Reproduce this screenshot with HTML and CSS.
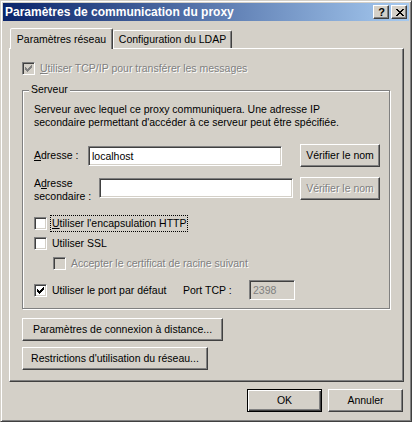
FILE: index.html
```html
<!DOCTYPE html>
<html lang="fr">
<head>
<meta charset="utf-8">
<title>Paramètres de communication du proxy</title>
<link rel="stylesheet" href="styles.css">
</head>
<body>
<div class="window">
  <div class="titlebar">
    <span class="title">Paramètres de communication du proxy</span>
    <div class="caption-btns">
      <span class="cbtn help">?</span>
      <span class="cbtn close">
        <svg width="8" height="7" viewBox="0 0 8 7" shape-rendering="crispEdges"><path fill="#000" d="M0 0h2v1h-2z M6 0h2v1h-2z M1 1h2v1h-2z M5 1h2v1h-2z M2 2h4v1h-4z M3 3h2v1h-2z M2 4h4v1h-4z M1 5h2v1h-2z M5 5h2v1h-2z M0 6h2v1h-2z M6 6h2v1h-2z"/></svg>
      </span>
    </div>
  </div>

  <div class="tabs">
    <div class="tab active">Paramètres réseau</div>
    <div class="tab">Configuration du LDAP</div>
  </div>

  <div class="panel">
    <div class="check-row disabled">
      <span class="cb checked"><svg width="7" height="7" viewBox="0 0 7 7" shape-rendering="crispEdges"><path d="M6 0h1v1h-1z M5 1h2v1h-2z M0 2h1v1h-1z M4 2h3v1h-3z M0 3h2v1h-2z M3 3h3v1h-3z M0 4h5v1h-5z M1 5h3v1h-3z M2 6h1v1h-1z"/></svg></span>
      <span class="lbl"><u>U</u>tiliser TCP/IP pour transférer les messages</span>
    </div>

    <div class="group">
      <span class="group-label">Serveur</span>
      <p class="desc">Serveur avec lequel ce proxy communiquera. Une adresse IP<br>secondaire permettant d'accéder à ce serveur peut être spécifiée.</p>

      <div class="field-row row-main">
        <span class="flabel w-addr"><u>A</u>dresse :</span>
        <div class="edit">localhost</div>
        <span class="btn vbtn">Vérifier le nom</span>
      </div>

      <div class="field-row row-second">
        <span class="flabel w-sec">A<u>d</u>resse<br>secondaire :</span>
        <div class="edit edit-sec"></div>
        <span class="btn vbtn disabled">Vérifier le nom</span>
      </div>

      <div class="check-row opt http">
        <span class="cb"></span>
        <span class="lbl focus"><u>U</u>tiliser l'encapsulation HTTP</span>
      </div>

      <div class="check-row opt ssl">
        <span class="cb"></span>
        <span class="lbl">Utiliser SSL</span>
      </div>

      <div class="check-row opt accept disabled">
        <span class="cb"></span>
        <span class="lbl">Accepter le certificat de racine suivant</span>
      </div>

      <div class="port-row">
        <div class="check-row port-check">
          <span class="cb checked"><svg width="7" height="7" viewBox="0 0 7 7" shape-rendering="crispEdges"><path d="M6 0h1v1h-1z M5 1h2v1h-2z M0 2h1v1h-1z M4 2h3v1h-3z M0 3h2v1h-2z M3 3h3v1h-3z M0 4h5v1h-5z M1 5h3v1h-3z M2 6h1v1h-1z"/></svg></span>
          <span class="lbl">Utiliser le port par défaut</span>
        </div>
        <span class="port-label">Port TCP :</span>
        <div class="edit edit-port disabled">2398</div>
      </div>
    </div>

    <span class="btn wide btn-remote">Paramètres de connexion à distance...</span>
    <span class="btn wide btn-restrict">Restrictions d'utilisation du réseau...</span>
  </div>

  <div class="footer">
    <span class="btn dlg default">OK</span>
    <span class="btn dlg">Annuler</span>
  </div>
</div>
</body>
</html>
```

FILE: styles.css
```css
* {
  box-sizing: border-box;
}

html,
body {
  margin: 0;
  padding: 0;
  background: #d4d0c8;
}

body {
  font-family: "Liberation Sans", Arial, sans-serif;
  font-size: 10.5px;
  line-height: 13px;
  color: #000;
}

u {
  text-decoration: underline;
  text-underline-offset: 1px;
}

.window {
  width: 412px;
  height: 422px;
  background: #d4d0c8;
  border: 1px solid;
  border-color: #d4d0c8 #404040 #404040 #d4d0c8;
  box-shadow: inset 1px 1px #fff, inset -1px -1px #808080;
  padding: 2px;
  display: flex;
  flex-direction: column;
}

/* title bar */
.titlebar {
  height: 18px;
  flex: none;
  background: linear-gradient(to right, #0a246a, #a6caf0);
  display: flex;
  align-items: flex-start;
  padding-left: 2px;
}

.title {
  flex: 1;
  color: #fff;
  font-weight: bold;
  font-size: 12px;
  line-height: 18px;
  white-space: nowrap;
}

.caption-btns {
  display: flex;
  gap: 2px;
  margin: 2px 2px 0 0;
}

.cbtn {
  width: 16px;
  height: 14px;
  background: #d4d0c8;
  border: 1px solid;
  border-color: #fff #404040 #404040 #fff;
  box-shadow: inset -1px -1px #808080;
  display: flex;
  align-items: center;
  justify-content: center;
}

.help {
  font-weight: bold;
  font-size: 11px;
  line-height: 12px;
  padding-left: 1px;
}

.close svg {
  display: block;
  margin-left: 1px;
}

/* tabs */
.tabs {
  display: flex;
  align-items: flex-end;
  height: 20px;
  margin: 7px 0 0 7px;
  flex: none;
}

.tab {
  height: 18px;
  min-width: 0;
  padding: 0;
  border: 1px solid;
  border-bottom: none;
  border-color: #fff #404040 transparent #fff;
  border-radius: 2px 2px 0 0;
  box-shadow: inset -1px 0 #808080;
  line-height: 17px;
  text-align: center;
  white-space: nowrap;
  flex: none;
}

.tab.active {
  position: relative;
  z-index: 1;
  height: 21px;
  width: 103px;
  margin-bottom: -1px;
  background: #d4d0c8;
  line-height: 20px;
}

.tabs .tab:not(.active) {
  width: 119px;
}

/* panel */
.panel {
  width: 395px;
  height: 334px;
  margin-left: 6px;
  flex: none;
  border: 1px solid;
  border-color: #fff #404040 #404040 #fff;
  box-shadow: inset -1px -1px #808080;
  padding: 13px 13px 0 12px;
  display: flex;
  flex-direction: column;
  align-items: flex-start;
}

/* checkboxes */
.check-row {
  display: flex;
  align-items: center;
  gap: 5px;
  height: 13px;
  white-space: nowrap;
}

.cb {
  width: 13px;
  height: 13px;
  flex: none;
  background: #fff;
  border: 1px solid;
  border-color: #808080 #fff #fff #808080;
  box-shadow: inset 1px 1px #404040, inset -1px -1px #d4d0c8;
  padding: 2px;
  display: flex;
}

.cb svg {
  display: block;
  fill: #000;
}

.disabled .cb {
  background: #d4d0c8;
}

.disabled .cb svg {
  fill: #808080;
}

.disabled .lbl,
.btn.disabled {
  color: #808080;
  text-shadow: 1px 1px 0 #fff;
}

/* group box */
.group {
  position: relative;
  width: 368px;
  margin-top: 15px;
  border: 1px solid #808080;
  box-shadow: 1px 1px 0 #fff, inset 1px 1px 0 #fff;
  padding: 12px 9px 8px 11px;
  display: flex;
  flex-direction: column;
  align-items: stretch;
}

.group-label {
  position: absolute;
  top: -8px;
  left: 6px;
  padding: 0 2px;
  background: #d4d0c8;
}

.desc {
  margin: 0;
  white-space: nowrap;
}

.field-row {
  display: flex;
}

.row-main {
  margin-top: 15px;
  height: 23px;
  align-items: center;
}

.row-second {
  margin-top: 10px;
  height: 26px;
  align-items: flex-start;
}

.flabel {
  flex: none;
  white-space: nowrap;
}

.w-addr {
  width: 54px;
}

.w-sec {
  width: 65px;
}

.edit {
  width: 194px;
  height: 20px;
  flex: none;
  background: #fff;
  border: 1px solid;
  border-color: #808080 #fff #fff #808080;
  box-shadow: inset 1px 1px #404040, inset -1px -1px #d4d0c8;
  padding: 0 3px;
  line-height: 18px;
  white-space: nowrap;
}

.edit-sec {
  margin-top: 1px;
}

.edit.disabled {
  background: #d4d0c8;
  color: #808080;
}

.edit-port {
  width: 46px;
}

/* buttons */
.btn {
  display: flex;
  align-items: center;
  justify-content: center;
  height: 23px;
  flex: none;
  background: #d4d0c8;
  border: 1px solid;
  border-color: #fff #404040 #404040 #fff;
  box-shadow: inset -1px -1px #808080, inset 1px 1px #d4d0c8;
  white-space: nowrap;
}

.vbtn {
  width: 80px;
  margin-left: auto;
}

.btn.default {
  border-color: #000;
  box-shadow: inset 1px 1px #fff, inset -1px -1px #404040, inset -2px -2px #808080;
}

/* option checkboxes */
.http {
  margin-top: 14px;
}

.ssl,
.accept {
  margin-top: 7px;
}

.accept {
  padding-left: 19px;
}

.focus {
  line-height: 15px;
  padding: 0 1px;
  margin-left: -1px;
  outline: 1px dotted #000;
}

.port-row {
  display: flex;
  align-items: center;
  height: 20px;
  margin-top: 10px;
}

.port-check {
  width: 149px;
  flex: none;
}

.port-label {
  width: 66px;
  flex: none;
  white-space: nowrap;
}

.wide.btn-remote {
  width: 201px;
  margin-top: 9px;
}

.wide.btn-restrict {
  width: 186px;
  margin-top: 6px;
}

/* footer */
.footer {
  display: flex;
  justify-content: flex-end;
  gap: 6px;
  margin-top: 7px;
  padding-right: 6px;
}

.dlg {
  width: 75px;
}
```
